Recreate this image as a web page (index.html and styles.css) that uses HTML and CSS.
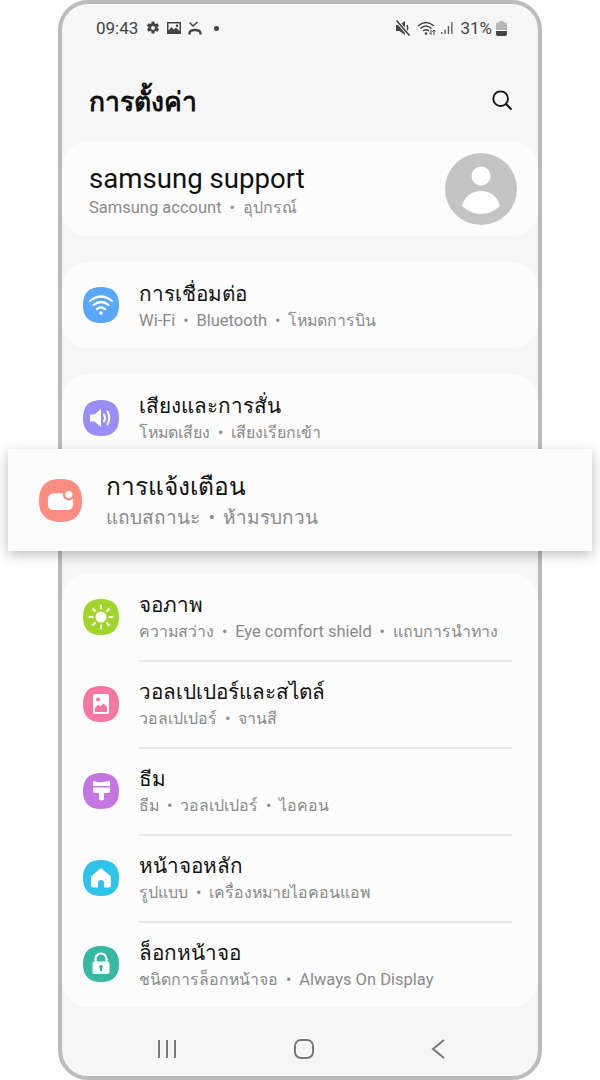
FILE: index.html
```html
<!DOCTYPE html>
<html lang="th">
<head>
    <meta charset="UTF-8">
    <meta name="viewport" content="width=device-width, initial-scale=1.0">
    <title>การตั้งค่า</title>
    <link rel="stylesheet" href="styles.css">
</head>
<body>
    <div class="phone">
        <div class="status-bar">
            <div class="status-group">
                <span class="clock">09:43</span>
                <svg class="status-icon" viewBox="0 0 14 14"><path fill="#444" fill-rule="evenodd" d="M5.6 0h2.8l.3 1.9 1.1.6 1.8-.7 1.4 2.4-1.5 1.2v1.2l1.5 1.2-1.4 2.4-1.8-.7-1.1.6-.3 1.9H5.6l-.3-1.9-1.1-.6-1.8.7L1 7.8l1.5-1.2V5.4L1 4.2l1.4-2.4 1.8.7 1.1-.6zM7 4.6a2 2 0 1 0 0 4 2 2 0 0 0 0-4z" transform="translate(0 .5)"/></svg>
                <svg class="status-icon" viewBox="0 0 14 14"><path fill="#444" fill-rule="evenodd" d="M0 1h14v12H0zm1.5 1.5v7l3-3.5 2.5 2.5 2-2 3.500 3.500V2.500zM10 3.500a1.300 1.300 0 1 1 0 2.600 1.300 1.300 0 0 1 0-2.600z"/></svg>
                <svg class="status-icon" viewBox="0 0 14 14"><path fill="none" stroke="#444" stroke-width="1.500" d="M1.500 1.500L5 5l4.500-4"/><path fill="none" stroke="#444" stroke-width="2.400" d="M1.500 13.500v-1q0-3.500 5.500-3.500t5.500 3.500v1"/></svg>
                <span class="status-dot"></span>
            </div>
            <div class="status-group status-right">
                <svg class="status-icon mute" viewBox="0 0 16 16"><path fill="#444" d="M1 5h3.500L10 1v14l-5.500-4H1z"/><path fill="none" stroke="#444" stroke-width="1.500" d="M12 5q1.500 3 0 6"/><path stroke="#f6f6f6" stroke-width="3.500" d="M1.500 .5l13 15"/><path stroke="#444" stroke-width="1.600" d="M1.500 .5l13 15"/></svg>
                <svg class="status-icon wifi" viewBox="0 0 20 16"><path fill="none" stroke="#444" stroke-width="1.500" d="M1 6q8-7 16 0M3.500 8.500q5.500-5 11 0M6 11q3-2.500 6 0"/><circle cx="9" cy="13.500" r="1.300" fill="#444"/><path fill="none" stroke="#444" stroke-width="1" d="M14 10v4.500M12.500 13l1.500 1.500M17 15v-5M15.500 11.500L17 10l1.500 1.500"/></svg>
                <svg class="status-icon signal" viewBox="0 0 13 14"><path fill="#555" d="M0 11h1.300v2H0zM3.400 8.500h1.300V13H3.400zM6.800 5h1.300v8H6.800zM10.200 1h1.300v12h-1.300z"/></svg>
                <span class="battery-text">31%</span>
                <svg class="battery" viewBox="0 0 11 15"><path fill="#b5b5b5" d="M3.500 0h4v1.500H9A2 2 0 0 1 11 3.500V9H0V3.500A2 2 0 0 1 2 1.500h1.500z"/><path fill="#444" d="M0 10h11v3a2 2 0 0 1-2 2H2a2 2 0 0 1-2-2z"/></svg>
            </div>
        </div>

        <div class="title-bar">
            <h1 class="page-title">การตั้งค่า</h1>
            <svg class="search" viewBox="0 0 24 24"><circle cx="10.500" cy="10.500" r="8" fill="none" stroke="#111" stroke-width="2"/><path stroke="#111" stroke-width="2.200" d="M16.300 16.300l6 6"/></svg>
        </div>

        <div class="card account">
            <div class="account-text">
                <div class="account-name">samsung support</div>
                <div class="sub"><span class="latin">Samsung account</span> &nbsp;•&nbsp; อุปกรณ์</div>
            </div>
            <svg class="avatar" viewBox="0 0 72 72"><circle cx="36" cy="36" r="36" fill="#c4c4c4"/><circle cx="36" cy="23" r="9.500" fill="#fff"/><path fill="#fff" d="M17 52.500C20 43 27 38 36 38s16 5 19 14.500C50 58 43 61 36 61s-14-3-19-8.500z"/></svg>
        </div>

        <div class="card">
            <div class="row">
                <svg class="icon" viewBox="0 0 36 36"><path fill="#58a7fb" d="M18 0C30 0 36 6 36 18S30 36 18 36 0 30 0 18 6 0 18 0Z"/><path fill="none" stroke="#fff" stroke-width="2.200" stroke-linecap="round" d="M7 14q11-9 22 0M10.500 18q7.500-6 15 0M14 22q4-3 8 0"/><circle cx="18" cy="26" r="1.800" fill="#fff"/></svg>
                <div class="row-text">
                    <div class="row-title">การเชื่อมต่อ</div>
                    <div class="sub"><span class="latin">Wi-Fi</span> &nbsp;•&nbsp; <span class="latin">Bluetooth</span> &nbsp;•&nbsp; โหมดการบิน</div>
                </div>
            </div>
        </div>

        <div class="card">
            <div class="row">
                <svg class="icon" viewBox="0 0 36 36"><path fill="#9a8df5" d="M18 0C30 0 36 6 36 18S30 36 18 36 0 30 0 18 6 0 18 0Z"/><path fill="#fff" d="M7 14.500h4.500L18 9v18l-6.500-5.500H7z"/><path fill="none" stroke="#fff" stroke-width="2" stroke-linecap="round" d="M21 14.500q2 3.500 0 7M24.500 11.500q3.500 6.500 0 13"/></svg>
                <div class="row-text">
                    <div class="row-title">เสียงและการสั่น</div>
                    <div class="sub">โหมดเสียง &nbsp;•&nbsp; เสียงเรียกเข้า</div>
                </div>
            </div>
            <div class="row"></div>
        </div>

        <div class="card">
            <div class="row">
                <svg class="icon" viewBox="0 0 36 36"><path fill="#a0d62c" d="M18 0C30 0 36 6 36 18S30 36 18 36 0 30 0 18 6 0 18 0Z"/><circle cx="18" cy="18" r="5.500" fill="#fff"/><path stroke="#fff" stroke-width="2" stroke-linecap="round" d="M18 6.500v3M18 26.500v3M6.500 18h3M26.500 18h3M10 10l2 2M24 24l2 2M26 10l-2 2M12 24l-2 2"/></svg>
                <div class="row-text">
                    <div class="row-title">จอภาพ</div>
                    <div class="sub">ความสว่าง &nbsp;•&nbsp; <span class="latin">Eye comfort shield</span> &nbsp;•&nbsp; แถบการนำทาง</div>
                </div>
            </div>
            <div class="row">
                <svg class="icon" viewBox="0 0 36 36"><path fill="#f5769f" d="M18 0C30 0 36 6 36 18S30 36 18 36 0 30 0 18 6 0 18 0Z"/><path fill="#fff" fill-rule="evenodd" d="M11.500 8h13A1.500 1.500 0 0 1 26 9.500v17a1.500 1.500 0 0 1-1.500 1.500h-13a1.500 1.500 0 0 1-1.500-1.500v-17A1.500 1.500 0 0 1 11.500 8zm.5 18h12v-5l-3.500-3.500-3 3-2-2-3.500 3.500zM15 11.500a2 2 0 1 0 0 4 2 2 0 0 0 0-4z"/></svg>
                <div class="row-text">
                    <div class="row-title">วอลเปเปอร์และสไตล์</div>
                    <div class="sub">วอลเปเปอร์ &nbsp;•&nbsp; จานสี</div>
                </div>
            </div>
            <div class="row">
                <svg class="icon" viewBox="0 0 36 36"><path fill="#c576e0" d="M18 0C30 0 36 6 36 18S30 36 18 36 0 30 0 18 6 0 18 0Z"/><path fill="#fff" d="M10 8q4 1.500 8.500 1t8.500-1v5H10zM10 14.500h17V18q0 2-2 2h-4v5a2.500 2.500 0 0 1-5 0v-5h-4q-2 0-2-2z"/></svg>
                <div class="row-text">
                    <div class="row-title">ธีม</div>
                    <div class="sub">ธีม &nbsp;•&nbsp; วอลเปเปอร์ &nbsp;•&nbsp; ไอคอน</div>
                </div>
            </div>
            <div class="row">
                <svg class="icon" viewBox="0 0 36 36"><path fill="#2ec4e9" d="M18 0C30 0 36 6 36 18S30 36 18 36 0 30 0 18 6 0 18 0Z"/><path fill="#fff" fill-rule="evenodd" d="M18 8l10 8.500V25a2.500 2.500 0 0 1-2.500 2.500h-15A2.500 2.500 0 0 1 8 25v-8.500zm-3 19.500h6V23a3 3 0 0 0-6 0z"/></svg>
                <div class="row-text">
                    <div class="row-title">หน้าจอหลัก</div>
                    <div class="sub">รูปแบบ &nbsp;•&nbsp; เครื่องหมายไอคอนแอพ</div>
                </div>
            </div>
            <div class="row">
                <svg class="icon" viewBox="0 0 36 36"><path fill="#35b8a4" d="M18 0C30 0 36 6 36 18S30 36 18 36 0 30 0 18 6 0 18 0Z"/><path fill="none" stroke="#fff" stroke-width="2.200" d="M12.500 16v-3a5.500 5.500 0 0 1 11 0v3"/><path fill="#fff" fill-rule="evenodd" d="M11.500 15.500h13a2 2 0 0 1 2 2V26a2 2 0 0 1-2 2h-13a2 2 0 0 1-2-2v-8.500a2 2 0 0 1 2-2zM18 19a1.800 1.800 0 0 0-1 3.300V25h2v-2.700A1.800 1.800 0 0 0 18 19z"/></svg>
                <div class="row-text">
                    <div class="row-title">ล็อกหน้าจอ</div>
                    <div class="sub">ชนิดการล็อกหน้าจอ &nbsp;•&nbsp; <span class="latin">Always On Display</span></div>
                </div>
            </div>
        </div>

        <div class="nav-bar">
            <svg class="nav-icon" viewBox="0 0 20 20"><path stroke="#777" stroke-width="2" d="M2 1v18M10 1v18M18 1v18"/></svg>
            <svg class="nav-icon" viewBox="0 0 20 20"><rect x="1" y="1" width="18" height="18" rx="6" fill="none" stroke="#777" stroke-width="2"/></svg>
            <svg class="nav-icon" viewBox="0 0 20 20"><path fill="none" stroke="#777" stroke-width="2" d="M14 1L3 10l11 9"/></svg>
        </div>
    </div>

    <div class="highlight">
        <svg class="highlight-icon" viewBox="0 0 36 36"><path fill="#fc8d80" d="M18 0C30 0 36 6 36 18S30 36 18 36 0 30 0 18 6 0 18 0Z"/><rect x="7.500" y="12" width="21" height="14" rx="4.500" fill="#fff"/><circle cx="25" cy="13" r="5" fill="#fc8d80"/><circle cx="25" cy="13" r="3" fill="#fff"/></svg>
        <div class="highlight-text">
            <div class="highlight-title">การแจ้งเตือน</div>
            <div class="highlight-sub">แถบสถานะ &nbsp;•&nbsp; ห้ามรบกวน</div>
        </div>
    </div>
</body>
</html>
```

FILE: styles.css
```css
body {
    margin: 0;
    width: 600px;
    height: 1080px;
    overflow: hidden;
    background: #fff;
    font-family: 'Roboto', 'Noto Sans', sans-serif;
    position: relative;
}
.phone {
    box-sizing: border-box;
    width: 484px;
    height: 1080px;
    margin-left: 58px;
    border: 4px solid #bbb;
    border-radius: 30px;
    background: #f6f6f6;
    overflow: hidden;
    display: flex;
    flex-direction: column;
}
.status-bar {
    display: flex;
    justify-content: space-between;
    align-items: center;
    height: 20px;
    margin-top: 14px;
    padding: 0 31px 0 34px;
    color: #444;
    font-size: 17px;
}
.status-group {
    display: flex;
    align-items: center;
    gap: 7px;
}
.status-right {
    gap: 4px;
}
.clock {
    margin-right: 1px;
}
.status-icon {
    width: 14px;
    height: 14px;
}
.mute {
    width: 16px;
    height: 16px;
    margin-right: 2px;
}
.wifi {
    width: 20px;
    height: 16px;
}
.signal {
    width: 13px;
    margin-right: 2px;
}
.status-dot {
    width: 5px;
    height: 5px;
    margin-left: 5px;
    border-radius: 50%;
    background: #444;
}
.battery {
    width: 11px;
    height: 15px;
}
.title-bar {
    display: flex;
    justify-content: space-between;
    align-items: center;
    height: 40px;
    margin-top: 44px;
    padding: 0 25px 0 27px;
}
.page-title {
    margin: 0;
    font-size: 26.5px;
    font-weight: 700;
    color: #111;
}
.search {
    width: 22px;
    height: 22px;
    margin-bottom: 4px;
}
.card {
    flex: none;
    background: #fcfcfc;
    border-radius: 26px;
    margin-bottom: 26px;
}
.account {
    display: flex;
    justify-content: space-between;
    align-items: center;
    height: 95px;
    margin-top: 19px;
    padding: 0 21px 0 27px;
}
.account-text {
    padding-top: 3px;
}
.account-name {
    font-size: 27.6px;
    line-height: 36px;
    color: #111;
}
.avatar {
    width: 72px;
    height: 72px;
}
.row {
    display: flex;
    align-items: center;
    height: 87px;
    padding-left: 21px;
}
.row:last-child {
    height: 86px;
}
.icon {
    flex: none;
    width: 36px;
    height: 36px;
    margin-right: 20px;
}
.row-text {
    flex: 1;
    align-self: stretch;
    margin-right: 26px;
    display: flex;
    flex-direction: column;
    justify-content: center;
    border-top: 2px solid transparent;
}
.row + .row .row-text {
    border-top-color: #e6e6e6;
}
.row-title {
    font-size: 20.7px;
    line-height: 26px;
    margin-bottom: 3px;
    color: #111;
}
.sub {
    font-size: 15.9px;
    line-height: 22px;
    color: #8a8a8a;
}
.latin {
    font-size: 16.5px;
}
.nav-bar {
    display: flex;
    justify-content: space-between;
    align-items: center;
    padding: 0 88px 0 95px;
    height: 32px;
}
.nav-icon {
    width: 20px;
    height: 20px;
}
/* enlarged row laid over the list */
.highlight {
    position: absolute;
    left: 8px;
    top: 449px;
    width: 584px;
    height: 102px;
    display: flex;
    align-items: center;
    background: #fcfcfc;
    box-shadow: 0 4px 12px rgba(0,0,0,0.25);
}
.highlight-icon {
    width: 43px;
    height: 43px;
    margin: 0 24px 0 31px;
}
.highlight-text {
    padding-top: 4px;
}
.highlight-title {
    font-size: 24.5px;
    line-height: 32px;
    color: #111;
}
.highlight-sub {
    font-size: 19px;
    word-spacing: -0.5px;
    line-height: 30px;
    color: #8a8a8a;
}
```
